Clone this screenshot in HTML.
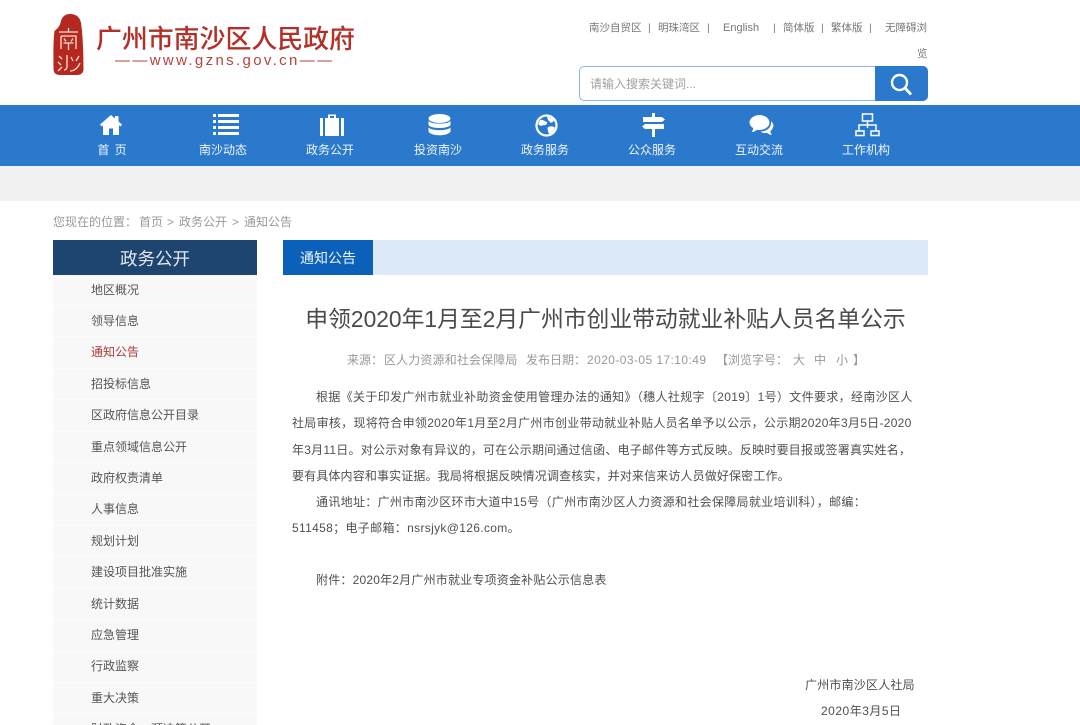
<!DOCTYPE html>
<html lang="zh-CN">
<head>
<meta charset="utf-8">
<title>广州市南沙区人民政府</title>
<style>
html,body{margin:0;padding:0;background:#fff;width:1080px;height:725px;overflow:hidden}
#w{position:relative;width:1080px;height:725px;overflow:hidden;font-family:"Liberation Sans","Noto Sans CJK SC",sans-serif;color:#555;filter:blur(.3px)}
.a{position:absolute;white-space:nowrap}
.c{text-align:center}
.nav{color:#f0f5fb;font-size:12px;line-height:16px;width:100px;text-align:center;top:142px}
.s{left:91px;font-size:12px;line-height:16px;color:#555}
.sl{position:absolute;left:53px;width:204px;height:1px;background:#fdfdfd}
.p{font-size:12px;line-height:16px;color:#505050}
.m{font-size:12px;line-height:16px;color:#999;top:352px}
.b{font-size:12px;line-height:16px;color:#999;top:214px}
.t{font-size:10.500px;line-height:14px;color:#777;top:21px}
svg{position:absolute;display:block}
</style>
</head>
<body>
<div id="w">

<!-- Logo -->
<svg style="left:53px;top:14px" width="31" height="62" viewBox="0 0 31 62">
<path d="M1.500 17C5 14 7 12 8 7C9 3 12 0 17 0C23 0 27 3 28 9C30 22 30.500 42 30.500 55C30.500 59 28 61 24 61L7 61C3 61 .500 59 .500 55C.500 42 0 28 1.500 17Z" fill="#b5281f"/>
<g fill="none" stroke="#f6e0da" stroke-width="1.300">
<path d="M6 18H25M15.500 14V18M8 22H23V35M8 22V35M11 24.500L13 27.500M20 24.500L18 27.500M10.500 29H20.500M15.500 29V36"/>
<path d="M6 42L9 45M5 48L8 51M5 57L9 53M14 41V53C14 55 12 56 11 56M18 43L20 47M26 42L23 47M17 57C21 57 25 54 27 49"/>
</g>
</svg>
<div class="a" style="left:96px;top:22px;font-size:25.900px;line-height:32px;color:#b23028;font-family:'Noto Sans CJK SC',sans-serif;font-weight:500">广州市南沙区人民政府</div>
<div class="a" style="left:115px;top:53px;font-size:15px;line-height:16px;letter-spacing:2.350px;color:#b5443d;font-family:'Liberation Sans',sans-serif">——www.gzns.gov.cn——</div>

<!-- Top links -->
<div class="a t" style="left:589px">南沙自贸区</div>
<div class="a t" style="left:648px">|</div>
<div class="a t" style="left:658px">明珠湾区</div>
<div class="a t" style="left:707px">|</div>
<div class="a t" style="left:723px;font-size:11px">English</div>
<div class="a t" style="left:773px">|</div>
<div class="a t" style="left:783px">简体版</div>
<div class="a t" style="left:821px">|</div>
<div class="a t" style="left:831px">繁体版</div>
<div class="a t" style="left:869px">|</div>
<div class="a t" style="left:885px">无障碍浏</div>
<div class="a t" style="left:917px;top:47px">览</div>

<!-- Search -->
<div class="a" style="left:579px;top:66px;width:296px;height:33px;border:1px solid #8ab8e6;border-right:none;border-radius:5px 0 0 5px;background:#fff"></div>
<div class="a" style="left:590px;top:76px;font-size:12px;line-height:16px;color:#a0a0a0">请输入搜索关键词...</div>
<div class="a" style="left:875px;top:66px;width:53px;height:35px;background:#2a79cd;border-radius:0 5px 5px 0"></div>
<svg style="left:888px;top:72px" width="26" height="25" viewBox="0 0 26 25">
<circle cx="11.500" cy="10.500" r="7.500" fill="none" stroke="#fff" stroke-width="2.400"/>
<path d="M17 16L23 22.500" stroke="#fff" stroke-width="2.800" fill="none"/>
</svg>

<!-- Nav bar -->
<div class="a" style="left:0;top:105px;width:1080px;height:61px;background:#2a79cd"></div>
<div class="a" style="left:0;top:166px;width:1080px;height:35px;background:#f1f1f1"></div>

<svg style="left:99px;top:114px" width="24" height="22" viewBox="0 0 24 22"><path d="M12 1L1 10.500L2.500 12.500L4 11.300V21H10V14.500H14V21H20V11.300L21.500 12.500L23 10.500L19.500 7.500V2H16V4.500Z" fill="#fff"/></svg>
<svg style="left:213px;top:113px" width="26" height="24" viewBox="0 0 26 24"><path d="M0 1H3V4H0ZM5 1H26V4H5ZM0 7H3V10H0ZM5 7H26V10H5ZM0 13H3V16H0ZM5 13H26V16H5ZM0 19H3V22H0ZM5 19H26V22H5Z" fill="#fff"/></svg>
<svg style="left:320px;top:113px" width="24" height="24" viewBox="0 0 24 24"><path d="M0 5H3V23H0ZM5 5H8V1.500H16V5H19V23H5ZM10 3V5H14V3ZM21 5H24V23H21Z" fill="#fff" fill-rule="evenodd"/></svg>
<svg style="left:428px;top:113px" width="23" height="24" viewBox="0 0 23 24"><ellipse cx="11.500" cy="5.500" rx="11" ry="4.500" fill="#fff"/><path d="M.500 8C3 11.500 20 11.500 22.500 8V12C20 16 3 16 .500 12ZM.500 14.500C3 18 20 18 22.500 14.500V18.500C20 23.500 3 23.500 .500 18.500Z" fill="#fff"/></svg>
<svg style="left:535px;top:114px" width="23" height="23" viewBox="0 0 23 23"><circle cx="11.500" cy="11.500" r="10" fill="none" stroke="#fff" stroke-width="2.200"/><path d="M5 6C8 5 9 7 12 8C13 10 10 12 8 11C6 13 4 11 3 10ZM12 2.500C14 3 18 4 19 7L16 9L13 6ZM13 13C16 12 19 12 20 14C19 17 16 20 14 20C13 17 12 15 13 13Z" fill="#fff"/></svg>
<svg style="left:642px;top:113px" width="23" height="24" viewBox="0 0 23 24"><path d="M10 0H13V4H20L23 6.500L20 9H1V4H10ZM3 11H22V16H13V24H10V16H3L0 13.500Z" fill="#fff"/></svg>
<svg style="left:749px;top:114px" width="25" height="23" viewBox="0 0 25 23"><path d="M10.500 1C16 1 20.500 4.500 20.500 8.500C20.500 12.500 16 16 10.500 16C9.500 16 8.500 16 8 15.700C6.500 17 4.500 18 2.500 18C3.500 17 4.300 15.500 4.200 14C2 12.800.5 10.800.5 8.500C.5 4.500 5 1 10.500 1Z" fill="#fff"/><path d="M22 7C24 9 25 11 24 13.500C23.500 15 22.500 16 21.500 17C21.500 18.500 22 20 23 21C21 21 19 20 18 18.800C15.500 19.500 13 19 11.500 17.500C17 17.500 23 14 22 7Z" fill="#fff"/></svg>
<svg style="left:855px;top:113px" width="25" height="24" viewBox="0 0 25 24" fill="none" stroke="#fff" stroke-width="1.500"><rect x="7.500" y="1" width="10" height="7"/><path d="M12.500 8V15M4 18V12H21V18"/><rect x="1" y="18" width="8" height="4.500"/><rect x="16" y="18" width="8" height="4.500"/></svg>

<div class="a nav" style="left:62px;word-spacing:2px">首 页</div>
<div class="a nav" style="left:173px">南沙动态</div>
<div class="a nav" style="left:280px">政务公开</div>
<div class="a nav" style="left:388px">投资南沙</div>
<div class="a nav" style="left:495px">政务服务</div>
<div class="a nav" style="left:602px">公众服务</div>
<div class="a nav" style="left:709px">互动交流</div>
<div class="a nav" style="left:816px">工作机构</div>

<!-- Breadcrumb -->
<div class="a b" style="left:53px">您现在的位置：</div>
<div class="a b" style="left:139px">首页</div>
<div class="a b" style="left:167px">&gt;</div>
<div class="a b" style="left:179px">政务公开</div>
<div class="a b" style="left:232px">&gt;</div>
<div class="a b" style="left:244px">通知公告</div>

<!-- Sidebar -->
<div class="a" style="left:53px;top:240px;width:204px;height:35px;background:#1d4570"></div>
<div class="a c" style="left:53px;top:248px;width:204px;font-size:17.500px;line-height:22px;color:#e4e9ef">政务公开</div>
<div class="a" style="left:53px;top:275px;width:204px;height:450px;background:#f8f8f8"></div>
<div class="sl" style="top:305px"></div><div class="sl" style="top:336px"></div><div class="sl" style="top:368px"></div><div class="sl" style="top:399px"></div><div class="sl" style="top:431px"></div><div class="sl" style="top:462px"></div><div class="sl" style="top:494px"></div><div class="sl" style="top:525px"></div><div class="sl" style="top:556px"></div><div class="sl" style="top:588px"></div><div class="sl" style="top:619px"></div><div class="sl" style="top:651px"></div><div class="sl" style="top:682px"></div><div class="sl" style="top:713px"></div>
<div class="a s" style="top:282px">地区概况</div>
<div class="a s" style="top:313px">领导信息</div>
<div class="a s" style="top:344px;color:#b33a3a">通知公告</div>
<div class="a s" style="top:376px">招投标信息</div>
<div class="a s" style="top:407px">区政府信息公开目录</div>
<div class="a s" style="top:439px">重点领域信息公开</div>
<div class="a s" style="top:470px">政府权责清单</div>
<div class="a s" style="top:501px">人事信息</div>
<div class="a s" style="top:533px">规划计划</div>
<div class="a s" style="top:564px">建设项目批准实施</div>
<div class="a s" style="top:596px">统计数据</div>
<div class="a s" style="top:627px">应急管理</div>
<div class="a s" style="top:658px">行政监察</div>
<div class="a s" style="top:690px">重大决策</div>
<div class="a s" style="top:721px">财政资金、预决算公开</div>

<!-- Content header -->
<div class="a" style="left:283px;top:240px;width:645px;height:35px;background:#dbe9f8"></div>
<div class="a" style="left:283px;top:240px;width:90px;height:35px;background:#0b61b9"></div>
<div class="a c" style="left:283px;top:249px;width:90px;font-size:14px;line-height:18px;color:#f0f5fb">通知公告</div>

<!-- Title -->
<div class="a c" style="left:283px;top:302px;width:645px;font-size:22.800px;line-height:34px;color:#4a4a4a">申领2020年1月至2月广州市创业带动就业补贴人员名单公示</div>
<div class="a m" style="left:347px">来源：</div>
<div class="a m" style="left:384px;letter-spacing:.14px">区人力资源和社会保障局</div>
<div class="a m" style="left:526px">发布日期：</div>
<div class="a m" style="left:587px;letter-spacing:.42px">2020-03-05 17:10:49</div>
<div class="a m" style="left:716px">【浏览字号：</div>
<div class="a m" style="left:793px">大</div>
<div class="a m" style="left:814px">中</div>
<div class="a m" style="left:836px">小</div>
<div class="a m" style="left:853px">】</div>

<!-- Body -->
<div class="a p" style="left:316px;top:389px;letter-spacing:.34px">根据《关于印发广州市就业补助资金使用管理办法的通知》（穗人社规字〔2019〕1号）文件要求，经南沙区人</div>
<div class="a p" style="left:292px;top:415px;letter-spacing:.29px">社局审核，现将符合申领2020年1月至2月广州市创业带动就业补贴人员名单予以公示，公示期2020年3月5日-2020</div>
<div class="a p" style="left:292px;top:442px;letter-spacing:.23px">年3月11日。对公示对象有异议的，可在公示期间通过信函、电子邮件等方式反映。反映时要目报或签署真实姓名，</div>
<div class="a p" style="left:292px;top:468px;letter-spacing:.14px">要有具体内容和事实证据。我局将根据反映情况调查核实，并对来信来访人员做好保密工作。</div>
<div class="a p" style="left:316px;top:494px;letter-spacing:.32px">通讯地址：广州市南沙区环市大道中15号（广州市南沙区人力资源和社会保障局就业培训科），邮编：</div>
<div class="a p" style="left:292px;top:520px;letter-spacing:.33px">511458；电子邮箱：nsrsjyk@126.com。</div>
<div class="a p" style="left:316px;top:572px;letter-spacing:.2px">附件：2020年2月广州市就业专项资金补贴公示信息表</div>
<div class="a p" style="left:805px;top:677px;letter-spacing:.2px">广州市南沙区人社局</div>
<div class="a p" style="left:821px;top:703px;letter-spacing:.5px">2020年3月5日</div>

</div>
</body>
</html>
